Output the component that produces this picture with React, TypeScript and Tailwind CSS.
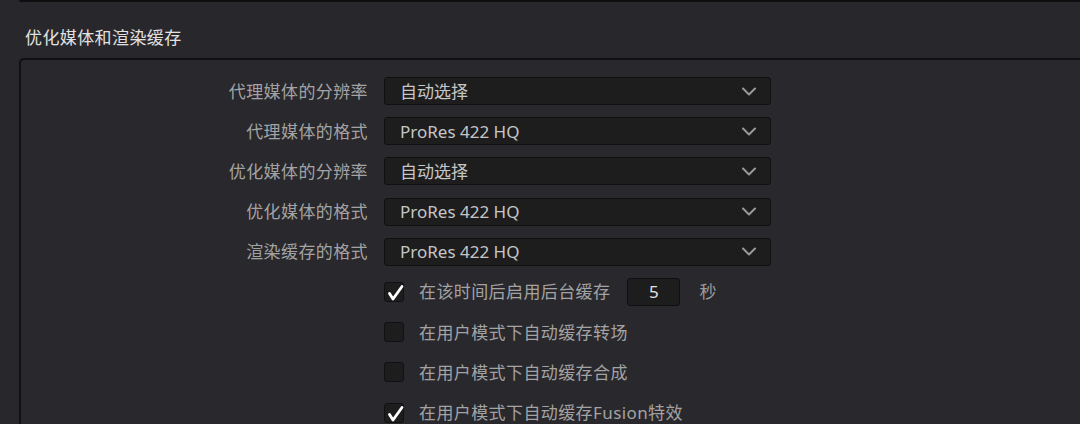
import React from "react";

const font = { fontFamily: '"Noto Sans", "Noto Sans CJK SC", sans-serif' };

function Chevron() {
  return (
    <svg width="14" height="9" viewBox="0 0 14 9" className="shrink-0">
      <path d="M1 1.5 L7 7.5 L13 1.5" fill="none" stroke="#9a9a9a" strokeWidth="2" strokeLinecap="round" strokeLinejoin="round" />
    </svg>
  );
}

function Check() {
  return (
    <svg width="20" height="20" viewBox="0 0 20 20" className="absolute left-0 top-0">
      <path d="M4.5 10.5 L8 16 L17 3.5" fill="none" stroke="#ffffff" strokeWidth="2.8" strokeLinecap="round" strokeLinejoin="round" />
    </svg>
  );
}

function SelectRow({ label, value }: { label: string; value: string }) {
  return (
    <div className="flex h-[28px] items-center">
      <div className="w-[347px] text-right text-[17px] tracking-[0.4px] text-[#a3a3a3] leading-none">{label}</div>
      <div className="ml-[16px] flex h-[28px] w-[387px] items-center justify-between rounded-[3px] border border-[#101010] bg-[#1d1d1e] pl-[15px] pr-[14px]">
        <span className="text-[17px] text-[#c6c6c6] leading-none">{value}</span>
        <Chevron />
      </div>
    </div>
  );
}

function CheckRow({ label, checked, extra }: { label: string; checked: boolean; extra?: React.ReactNode }) {
  return (
    <div className="flex h-[28px] items-center">
      <div className="ml-[363px] relative h-[20px] w-[20px] rounded-[3px] border border-[#111] bg-[#1d1d1e]">
        {checked && <Check />}
      </div>
      <span className="ml-[15px] text-[17px] tracking-[0.4px] text-[#a3a3a3] leading-none">{label}</span>
      {extra}
    </div>
  );
}

export default function App() {
  return (
    <div className="h-[424px] w-[1080px] overflow-hidden bg-[#28272c]" style={font}>
      <div className="ml-[19px] h-[2px] rounded-bl-[3px] bg-[#0e0e0f]" />
      <div className="pl-[25px] pt-[25px] text-[17px] tracking-[0.4px] text-[#e2e2e2] leading-[22px]">优化媒体和渲染缓存</div>
      <div className="ml-[19px] mt-[9px] h-[400px] rounded-tl-[5px] border-l-2 border-t-2 border-[#111112] bg-[#29282d] pt-[17px]">
        <div className="flex flex-col gap-[12.2px]">
          <SelectRow label="代理媒体的分辨率" value="自动选择" />
          <SelectRow label="代理媒体的格式" value="ProRes 422 HQ" />
          <SelectRow label="优化媒体的分辨率" value="自动选择" />
          <SelectRow label="优化媒体的格式" value="ProRes 422 HQ" />
          <SelectRow label="渲染缓存的格式" value="ProRes 422 HQ" />
          <CheckRow
            label="在该时间后启用后台缓存"
            checked
            extra={
              <>
                <div className="ml-[17px] flex h-[28px] w-[53px] items-center justify-center rounded-[3px] border border-[#101010] bg-[#1d1d1e] text-[17px] text-[#e2e2e2] leading-none">5</div>
                <span className="ml-[19px] text-[17px] text-[#9c9c9c] leading-none">秒</span>
              </>
            }
          />
          <CheckRow label="在用户模式下自动缓存转场" checked={false} />
          <CheckRow label="在用户模式下自动缓存合成" checked={false} />
          <CheckRow label="在用户模式下自动缓存Fusion特效" checked />
        </div>
      </div>
    </div>
  );
}
